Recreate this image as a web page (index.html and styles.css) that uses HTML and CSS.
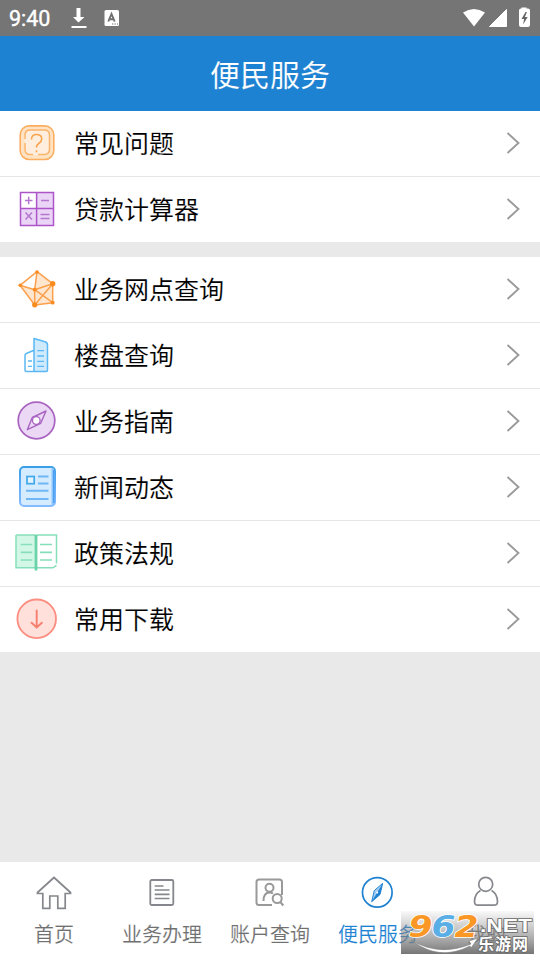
FILE: index.html
```html
<!DOCTYPE html>
<html lang="zh-CN">
<head>
<meta charset="utf-8">
<title>便民服务</title>
<link rel="stylesheet" href="styles.css">
</head>
<body>
<div class="app">
  <div class="status">
    <span class="time">9:40</span>
    <svg class="st-download" width="16" height="22" viewBox="0 0 16 22"><path d="M5.500 1h4v9h4L7.500 15.500 2 10h3.500z M0.500 19h15v2h-15z" fill="#fff"/></svg>
    <svg class="st-app" width="16" height="18" viewBox="0 0 16 18"><rect x="0.500" y="1" width="14.500" height="16" rx="1.500" fill="#fff"/><path d="M4.300 12.500 7.500 5l3.200 7.500M5.500 10.200h4" fill="none" stroke="#707070" stroke-width="1.900"/><path d="M8 15h1.300M10.500 15h1.300M13 15h1" stroke="#707070" stroke-width="1.200"/></svg>
    <svg class="st-signals" width="70" height="24" viewBox="0 0 70 24"><path d="M1 6.500Q12 -0.500 23 6.500L12 20.500z" fill="#fff"/><path d="M27.500 20.500 44.500 3.500V20.500z" fill="#fff" stroke="#fff"/><path d="M59.500 2.500v-1h5v1h1.500q2 0 2 2V19q0 2-2 2h-7q-2 0-2-2V4.500q0-2 2-2z" fill="#fff"/><path d="M63.500 6 59.500 13h2.600l-1 5.500 4.600-7.500h-2.800l2-5z" fill="#666"/></svg>
  </div>
  <header class="header">便民服务</header>

  <main class="content">
    <ul class="group">
      <li class="row">
        <svg class="icon" viewBox="0 0 46 45"><rect x="6.200" y="4.900" width="33.600" height="33.600" rx="9" fill="#ffe3c3" stroke="#fbae60" stroke-width="1.600"/><rect x="10.500" y="9" width="25" height="25" rx="5.500" fill="#ffeedd"/><path d="M11 18v-4q0-5 5-5h14q5.500 0 5.500 5v14q0 5.500-5.500 5.500H24M19 33.500h-3q-5 0-5-5V22" fill="none" stroke="#fbb46c" stroke-width="1.500"/><path d="M17.500 18.500q0-5 5-5 5.200 0 5.200 4.500 0 2.500-2.700 4.200-2.500 1.600-2.500 4.300M22.500 29.200v2" fill="none" stroke="#f9a550" stroke-width="1.600"/></svg>
        <span class="label">常见问题</span><svg class="chev" viewBox="0 0 14 24"><path d="M1.500 2 12.500 12 1.500 22"/></svg>
      </li>
      <li class="row">
        <svg class="icon" viewBox="0 0 46 45"><rect x="6.500" y="5.500" width="33" height="33" fill="#ead5f6"/><path d="M7 6h15.500v15H7z" fill="#fff"/><path d="M6.500 5.500h33v33h-33zM22.600 5.500v33M6.500 21.500h33" fill="none" stroke="#ac55c8" stroke-width="1.500"/><path d="M11 13.500h7.500M14.700 9.800v7.400M27 13.500h8M11.500 25.500l6.500 7M18 25.500l-6.500 7M26.500 27.500h9M26.500 31.500h9" fill="none" stroke="#b477cf" stroke-width="1.500"/></svg>
        <span class="label">贷款计算器</span><svg class="chev" viewBox="0 0 14 24"><path d="M1.500 2 12.500 12 1.500 22"/></svg>
      </li>
    </ul>

    <ul class="group">
      <li class="row">
        <svg class="icon" viewBox="0 0 46 45"><path d="M23 4.700 38.700 16.700V35.700L20.700 38 6 18.300 20.700 22.700z" fill="#ffe6ce"/><path d="M23 4.700 6 18.300 20.700 38l18-2.300v-19zL20.700 22.700V38l18-21.300-18 6L6 18.300M20.700 22.700l18 13" fill="none" stroke="#fba04c" stroke-width="1.500" stroke-linejoin="round"/><g fill="#f88c20"><circle cx="23" cy="5" r="1.800"/><circle cx="6.200" cy="18.300" r="1.800"/><circle cx="38.700" cy="16.700" r="2.700"/><circle cx="20.700" cy="22.700" r="1.900"/><circle cx="20.700" cy="37.800" r="2.600"/><circle cx="38.700" cy="35.700" r="1.900"/></g></svg>
        <span class="label">业务网点查询</span><svg class="chev" viewBox="0 0 14 24"><path d="M1.500 2 12.500 12 1.500 22"/></svg>
      </li>
      <li class="row">
        <svg class="icon" viewBox="0 0 46 45"><path d="M20 5.500 31 8.800q2.500.8 2.500 3.200V38.500H20z" fill="#cfeafd"/><path d="M20 38.500V5.500L31 8.800q2.500.8 2.500 3.200V37q0 1.500-1.500 1.500H12.500Q11 38.500 11 37V22.500q0-1.500 1.300-2L20 17.300" fill="none" stroke="#5ab8f4" stroke-width="1.500" stroke-linejoin="round"/><path d="M23.300 17.700H30M23.300 23H30M23.300 28.300H30M23.300 33.300H30M14 28H18M14 33.300H18" stroke="#5ab8f4" stroke-width="1.300"/></svg>
        <span class="label">楼盘查询</span><svg class="chev" viewBox="0 0 14 24"><path d="M1.500 2 12.500 12 1.500 22"/></svg>
      </li>
      <li class="row">
        <svg class="icon" viewBox="0 0 46 45"><circle cx="22.500" cy="21.500" r="18.300" fill="#ead8f5" stroke="#a963c1" stroke-width="1.700"/><path d="M32 12 26.700 24.300 13.300 30.700 18.300 18.500z" fill="#ead8f5" stroke="#a963c1" stroke-width="1.400" stroke-linejoin="round"/><circle cx="22.300" cy="21.500" r="3.800" fill="#fff" stroke="#a963c1" stroke-width="1.300"/></svg>
        <span class="label">业务指南</span><svg class="chev" viewBox="0 0 14 24"><path d="M1.500 2 12.500 12 1.500 22"/></svg>
      </li>
      <li class="row">
        <svg class="icon" viewBox="0 0 46 45"><defs><linearGradient id="news" x1="0" y1="0" x2="0" y2="1"><stop offset="0" stop-color="#3a9fe8"/><stop offset="1" stop-color="#86bcff"/></linearGradient></defs><rect x="6" y="2" width="35" height="39" rx="4" fill="#d5ebff" stroke="url(#news)" stroke-width="2"/><path d="M37.500 2.500v38q3-.5 3-4v-30q0-3.500-3-4z" fill="#8ec6ff"/><path d="M39.800 5v33" stroke="#4a9df4" stroke-width="1.500"/><rect x="13" y="11.500" width="7.200" height="7.200" fill="#e3f4ff" stroke="#41a8ea" stroke-width="1.700"/><path d="M24 11.500h10.500M24 18.500h10.500M12 25.700h22.500M12 34h22.500" stroke="#6fb6f4" stroke-width="1.900"/></svg>
        <span class="label">新闻动态</span><svg class="chev" viewBox="0 0 14 24"><path d="M1.500 2 12.500 12 1.500 22"/></svg>
      </li>
      <li class="row">
        <svg class="icon" viewBox="0 0 46 45"><path d="M2 4h20v33H2z" fill="#d3f7e7"/><path d="M2 4h19l1 1 1-1h19.500v28.500M39 36.800H2V4M39 36.800l3.500-2.500" fill="none" stroke="#86dfbb" stroke-width="1.500"/><path d="M22 4v35.500" stroke="#6ad3a8" stroke-width="2.800"/><path d="M6.700 13.500h11.600M6.700 21.300h11.600M6.700 29h11.600M26 13.500h12M26 21.300h12M26 29h12" stroke="#86dfbb" stroke-width="1.700"/></svg>
        <span class="label">政策法规</span><svg class="chev" viewBox="0 0 14 24"><path d="M1.500 2 12.500 12 1.500 22"/></svg>
      </li>
      <li class="row">
        <svg class="icon" viewBox="0 0 46 45"><circle cx="22.700" cy="21.800" r="19.300" fill="#ffe0da" stroke="#fb8e80" stroke-width="1.800"/><path d="M22.700 12.800V30.500M17 25.300l5.700 5.200 5.700-5.200" fill="none" stroke="#f87e70" stroke-width="1.900"/></svg>
        <span class="label">常用下载</span><svg class="chev" viewBox="0 0 14 24"><path d="M1.500 2 12.500 12 1.500 22"/></svg>
      </li>
    </ul>
  </main>

  <nav class="tabs">
    <div class="tab">
      <svg class="tab-icon" viewBox="0 0 40 40"><path d="M20 5.500 3.500 20.500v1h5.300v14.800h7V24h8v12.300h7.400V21.500h5.300v-1z"/></svg>
      <span>首页</span>
    </div>
    <div class="tab">
      <svg class="tab-icon" viewBox="0 0 40 40"><rect x="8.300" y="8" width="23" height="25" rx="1.500" stroke-width="1.800"/><path d="M12.700 14h8.800M12.700 18h14.800M12.700 22.300h14.800M12.700 26.500h14.800"/></svg>
      <span>业务办理</span>
    </div>
    <div class="tab">
      <svg class="tab-icon grey" viewBox="0 0 40 40"><path d="M22 33H9q-2.500 0-2.500-2.500V10Q6.500 7.500 9 7.500h20.500q2.500 0 2.500 2.500v13"/><circle cx="19.500" cy="15.800" r="4"/><path d="M13.500 29q0-8.500 6-8.500 2 0 3.500 1"/><circle cx="27.200" cy="26.500" r="4.500"/><path d="M30.300 30l3 3.500"/></svg>
      <span>账户查询</span>
    </div>
    <div class="tab active">
      <svg class="tab-icon" viewBox="0 0 40 40"><circle cx="19.300" cy="20.400" r="14.800"/><path d="M24.700 11.300 16.300 18.600 13.700 29.700 22 22.500z" fill="#a7cff2" stroke-width="1"/><path d="M24.700 11.300 22 22.500 13.700 29.700z" fill="#1e82d2" stroke="none"/><circle cx="19.200" cy="20.500" r="1" fill="#fff" stroke="none"/></svg>
      <span>便民服务</span>
    </div>
    <div class="tab">
      <svg class="tab-icon" viewBox="0 0 40 40"><circle cx="19.700" cy="12.300" r="7"/><path d="M14.500 18.500Q8.700 21.500 8.500 29.500q0 3.700 3.500 3.700h16q3.500 0 3.500-3.700-.2-8-6-11"/></svg>
      <span>我的</span>
    </div>
  </nav>

  <svg class="watermark" width="133" height="43" viewBox="0 0 133 43">
    <defs><linearGradient id="shade" x1="0" y1="0" x2="0" y2="1"><stop offset="0" stop-color="#888" stop-opacity="0.050"/><stop offset="0.450" stop-color="#888" stop-opacity="0.500"/><stop offset="1" stop-color="#707070" stop-opacity="0.960"/></linearGradient></defs>
    <rect width="133" height="43" fill="url(#shade)"/>
    <path d="M10 29Q38 46 70 33l-2-3 9-3-7 10-1-2Q38 51 10 29z" fill="#fff" stroke="#777" stroke-width="0.600"/>
    <g class="wm-back"><text x="7.500" y="25.500" textLength="24" lengthAdjust="spacingAndGlyphs">9</text><text x="30.500" y="25.500" textLength="24" lengthAdjust="spacingAndGlyphs">6</text><text x="53.500" y="25.500" textLength="24" lengthAdjust="spacingAndGlyphs">2</text></g>
    <text class="wm-net" x="79" y="20.500" textLength="52" lengthAdjust="spacingAndGlyphs">.NET</text>
    <text class="wm-cn" x="77" y="38.500" textLength="50">乐游网</text>
  </svg>
</div>
</body>
</html>
```
FILE: styles.css
```css
* { box-sizing: border-box; }
body {
  margin: 0;
  font-family: "Noto Sans CJK SC", sans-serif;
  color: #000;
}
.app {
  position: relative;
  display: flex;
  flex-direction: column;
  width: 540px;
  height: 960px;
  overflow: hidden;
  background: #e9e9e9;
}
.status {
  display: flex;
  align-items: center;
  height: 36px;
  padding: 0 0 0 9px;
  background: #757575;
}
.time {
  width: 62px;
  font: 400 21.5px/36px Roboto, sans-serif;
  color: #fff;
  padding-top: 1px;
  -webkit-text-stroke: 0.4px #fff;
}
.st-app { margin-left: 17px; }
.st-signals { margin-left: auto; margin-right: 8px; margin-top: -1px; }
.header {
  height: 75px;
  line-height: 74px;
  text-align: center;
  font-size: 30px;
  color: #fff;
  background: #1e82d2;
  -webkit-text-stroke: 0.15px #1e82d2;
}
.content {
  flex: 1;
  display: flex;
  flex-direction: column;
  gap: 15px;
}
.group {
  margin: 0;
  padding: 0;
  list-style: none;
  background: #fff;
}
.row {
  display: flex;
  align-items: center;
  height: 66px;
  padding: 0 20px 0 14px;
  border-bottom: 1px solid #e6e6e6;
}
.row:last-child { height: 65px; border-bottom: 0; }
.icon { width: 46px; height: 45px; }
.label {
  flex: 1;
  margin-left: 14px;
  padding-bottom: 4px;
  font-size: 25px;
  line-height: 60px;
  -webkit-text-stroke: 0.12px #fff;
}
.chev { width: 14px; height: 24px; margin-bottom: 2px; }
.chev path { fill: none; stroke: #999; stroke-width: 1.8; }
.tabs {
  display: flex;
  height: 98px;
  background: #fff;
}
.tab {
  flex: 1;
  display: flex;
  flex-direction: column;
  align-items: center;
  padding-top: 10px;
  font-size: 20px;
  line-height: 30px;
  color: #707070;
}
.tab span { margin-top: 7px; -webkit-text-stroke: 0.12px #fff; }
.tab-icon {
  width: 40px;
  height: 40px;
  fill: none;
  stroke: #85878c;
  stroke-width: 1.7;
}
.tab-icon.grey { stroke: #999; stroke-width: 2; }
.active { color: #1e82d2; }
.active .tab-icon { stroke: #1e82d2; }
.watermark {
  position: absolute;
  left: 401px;
  top: 911px;
  overflow: visible;
}
.wm-back {
  font: italic 700 31px "DejaVu Sans", sans-serif;
  fill: #fa9725;
  stroke: #fff;
  stroke-width: 1.6px;
  paint-order: stroke;
}
.wm-back text:nth-child(2) { fill: #58aee5; }
.wm-net {
  font: 700 19px "Liberation Sans", sans-serif;
  fill: #fff;
  stroke: #666;
  stroke-width: 1.5px;
  paint-order: stroke;
}
.wm-cn {
  font: 700 16px "Noto Sans CJK SC", sans-serif;
  fill: #fff;
  stroke: #666;
  stroke-width: 1.5px;
  paint-order: stroke;
}
```
